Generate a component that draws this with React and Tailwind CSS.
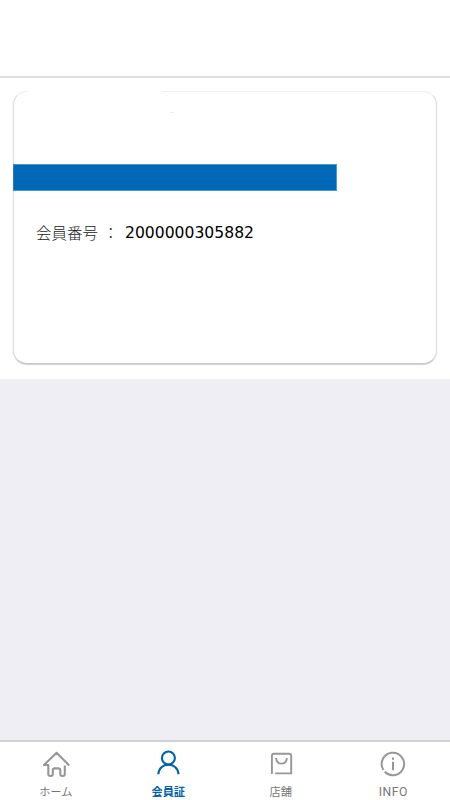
import React from "react";

const JP_FONT = "font-['Noto_Sans_CJK_JP',sans-serif]";

function HomeIcon() {
  return (
    <svg width="32" height="32" viewBox="0 0 32 32" fill="none" stroke="currentColor" strokeWidth="2.1" strokeLinejoin="round">
      <path d="M29.2 17.4L16.6 4.8L4 17H8.3V26Q8.3 28 10.3 28H10.9Q12.8 28 12.8 26.1V22.4Q12.8 20.4 14.7 20.4H18.4Q20.3 20.4 20.3 22.4V26.1Q20.3 28 22.2 28H22.8Q24.8 28 24.8 26V17.6" />
    </svg>
  );
}

function MemberIcon() {
  return (
    <svg width="32" height="32" viewBox="0 0 32 32" fill="none" stroke="currentColor" strokeWidth="2.1">
      <circle cx="16.4" cy="10" r="6.5" />
      <path d="M6.3 26.3C6.6 20.2 11 16.6 16.4 16.6S26.2 20.2 26.5 26.3" />
    </svg>
  );
}

function ShopIcon() {
  return (
    <svg width="32" height="32" viewBox="0 0 32 32" fill="none" stroke="currentColor" strokeWidth="1.9">
      <path d="M6.9 26V7.7Q6.9 5.7 8.9 5.7H24.2Q26.2 5.7 26.2 7.7V25.4H10.2" />
      <path d="M11.2 10C11.4 13.6 13.5 15.6 16.5 15.6S21.6 13.6 21.8 10" />
    </svg>
  );
}

function InfoIcon() {
  return (
    <svg width="32" height="32" viewBox="0 0 32 32" fill="none" stroke="currentColor" strokeWidth="2">
      <path d="M7.8 23.7A11.2 11.2 0 1 0 6.4 21.9" />
      <path d="M16 13.7V22.2M16 9.5V11.7" />
    </svg>
  );
}

const tabs = [
  { label: "ホーム", Icon: HomeIcon },
  { label: "会員証", Icon: MemberIcon, active: true },
  { label: "店舗", Icon: ShopIcon },
  { label: "INFO", Icon: InfoIcon, latin: true },
];

function MemberCard() {
  return (
    <div className="relative mx-[13px] mt-[13px] h-[273px] rounded-[14px] border border-t-[#f1f1f1] border-x-[#dedede] border-b-[#c8c8c8] bg-white pt-[72px] shadow-[0_1px_1px_#d0d0d0]">
      {/* Blank patch over the card's top edge */}
      <div className="absolute -top-px left-3.5 h-2 w-[134px] bg-white" />
      <div className="absolute top-5 left-[156px] h-px w-1 bg-[#ececec]" />

      <div className="-ml-px h-[27px] w-[324px] border border-[#489acb] border-l-[#2c7bb5] bg-[#0068b7]" />

      <div className="mt-[30px] flex h-6 items-center pl-[22px]">
        <span className={`-mt-px w-[67px] text-[15.5px] font-light text-[#222] ${JP_FONT}`}>会員番号</span>
        <span className={`-mt-px w-[22px] text-[15.5px] font-light text-[#333] ${JP_FONT}`}>：</span>
        <span className="mt-0.5 font-['DejaVu_Sans',sans-serif] text-[15.6px] text-black">2000000305882</span>
      </div>
    </div>
  );
}

export default function App() {
  return (
    <div className="flex h-[800px] w-[450px] flex-col overflow-hidden bg-[#eeeef4]">
      {/* Header */}
      <header className="h-[78px] shrink-0 border-b-2 border-[#e0e0e0] bg-white" />

      <main className="flex-1">
        <section className="flow-root h-[301px] bg-white">
          <MemberCard />
        </section>
      </main>

      {/* Bottom tabs */}
      <nav className="grid h-[60px] shrink-0 grid-cols-4 border-t-2 border-[#d1d1d5] bg-white">
        {tabs.map(({ label, Icon, active, latin }) => (
          <button
            key={label}
            className={`flex flex-col items-center pt-[6px] pr-px ${active ? "text-[#0062a8]" : "text-[#979797]"}`}
          >
            <Icon />
            <span
              className={`mt-[3px] h-4 leading-4 ${
                latin
                  ? "pt-px font-['Roboto',sans-serif] text-[12.2px] font-normal tracking-[0.5px]"
                  : `text-[11.2px] ${JP_FONT}`
              } ${active ? "font-bold" : "text-[#777]"}`}
            >
              {label}
            </span>
          </button>
        ))}
      </nav>
    </div>
  );
}
